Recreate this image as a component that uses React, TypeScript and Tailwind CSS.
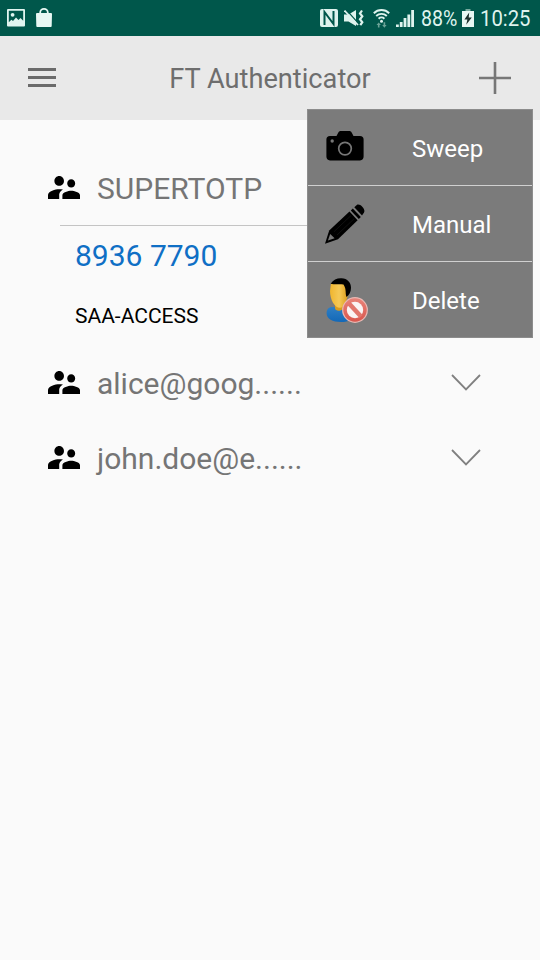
import type { ReactNode } from "react"

interface Account {
  name: string
  code?: string
  issuer?: string
}

interface MenuItem {
  label: string
  icon: ReactNode
}

const accounts: Account[] = [
  { name: "SUPERTOTP", code: "8936 7790", issuer: "SAA-ACCESS" },
  { name: "alice@goog......" },
  { name: "john.doe@e......" },
]

function PictureIcon() {
  return (
    <svg className="h-[18px] w-[18px]" viewBox="0 0 18 18">
      <path
        fill="#e0f5f0"
        fillRule="evenodd"
        d="M1 0h16a1 1 0 0 1 1 1v15.5a1 1 0 0 1-1 1H1a1 1 0 0 1-1-1V1a1 1 0 0 1 1-1zM1.800 1.800v11.500l2.600-2.500 1.600 1.200 3-3.500 2.500 2.500 2-2 2.700 2.700V1.800z"
      />
      <circle cx="5.6" cy="5.8" r="1.9" fill="#e0f5f0" />
    </svg>
  )
}

function BagIcon() {
  return (
    <svg className="h-[19px] w-4" viewBox="0 0 16 19">
      <path d="M4.2 6V4.6a3.8 3.7 0 0 1 7.6 0V6" fill="none" stroke="#e8f8f4" strokeWidth="1.8" />
      <path d="M1 5h14a1 1 0 0 1 1 1l-.3 12a1 1 0 0 1-1 1H1.3a1 1 0 0 1-1-1L0 6a1 1 0 0 1 1-1z" fill="#e8f8f4" />
    </svg>
  )
}

function NfcIcon() {
  return (
    <svg className="h-[18px] w-[18px]" viewBox="0 0 18 18">
      <rect width="18" height="18" rx="2" fill="#dff3ee" />
      <path d="M4.5 16V3l9 12V2" fill="none" stroke="#00574b" strokeWidth="2" />
    </svg>
  )
}

function MuteIcon() {
  return (
    <svg className="h-[18px] w-5" viewBox="0 0 20 18">
      <path d="M0 5.5h4.5L12 1v16l-7.5-4.5H0z" fill="#dff3ee" />
      <path d="M1.5 0 14.5 14.5" stroke="#00574b" strokeWidth="1.2" />
      <path d="M.5 1.5 14 16" stroke="#dff3ee" strokeWidth="1.8" />
      <path d="M18 1.5 16 4.5l2.3 2.8L16 10.3l2.3 2.9-2 3" fill="none" stroke="#dff3ee" strokeWidth="2.2" />
    </svg>
  )
}

function WifiIcon() {
  return (
    <svg className="h-[19px] w-[17px]" viewBox="0 0 17 19">
      <path
        d="M.8 4.2a11 11 0 0 1 15.4 0M3.2 7a7.7 7.7 0 0 1 10.6 0M5.6 9.7a4.2 4.2 0 0 1 5.8 0"
        fill="none"
        stroke="#dff3ee"
        strokeWidth="1.9"
      />
      <circle cx="8.5" cy="12.2" r="1.5" fill="#dff3ee" />
      <path d="M3.5 16 5.7 13.5l2.2 2.5H6.5v2.5H4.9V16zM9.2 16h1.4v-2.7h1.6V16h1.4l-2.2 2.8z" fill="#6ba397" />
    </svg>
  )
}

function SignalIcon() {
  return (
    <svg className="h-[17px] w-[18px]" viewBox="0 0 18 17" fill="#dff3ee">
      <path d="M0 14.5h2.8V17H0zM3.8 12h2.8v5H3.8zM7.6 8h2.8v9H7.6zM11.4 4.5h2.8V17h-2.8zM15.2 0H18v17h-2.8z" />
    </svg>
  )
}

function BatteryIcon() {
  return (
    <svg className="h-[18px] w-3" viewBox="0 0 12 18">
      <path d="M3.5 0h5v2h-5z" fill="#78aa9f" />
      <path d="M0 2h12v16H0z" fill="#e8f8f4" />
      <path d="M7.2 3.5 2.4 10.6h3L4.2 15.8l5.6-7.4H6.7z" fill="#1c302c" />
    </svg>
  )
}

function PeopleIcon() {
  return (
    <svg className="h-[23px] w-8" viewBox="2 5 20 14" preserveAspectRatio="none">
      <path d="M16.5 12c1.38 0 2.49-1.12 2.49-2.5S17.88 7 16.5 7C15.12 7 14 8.12 14 9.5s1.12 2.5 2.5 2.5zM9 11c1.66 0 2.99-1.34 2.99-3S10.66 5 9 5C7.34 5 6 6.34 6 8s1.34 3 3 3zm7.5 3c-1.83 0-5.5.92-5.5 2.75V19h11v-2.25c0-1.83-3.67-2.75-5.5-2.75zM9 13c-2.33 0-7 1.17-7 3.5V19h7v-2.25c0-.85.33-2.34 2.37-3.47C10.5 13.1 9.66 13 9 13z" />
    </svg>
  )
}

function CameraIcon() {
  return (
    <svg className="mr-[2px] mb-[3px] h-[30px] w-[38px]" viewBox="0 0 38 30">
      <path d="M4 5h6.5l1.7-3.2A2.6 2.6 0 0 1 14.8 0h8.4a2.6 2.6 0 0 1 2.6 1.8L27.5 5H34a3.6 3.6 0 0 1 3.6 3.6v17A3.8 3.8 0 0 1 34 29.4H4A3.8 3.8 0 0 1 .4 25.6v-17A3.6 3.6 0 0 1 4 5z" />
      <circle cx="19" cy="17.6" r="6.3" fill="none" stroke="#777" strokeWidth="1.7" />
      <circle cx="6.2" cy="10" r="1.7" fill="#777" />
    </svg>
  )
}

function PencilIcon() {
  return (
    <svg className="mr-[2px] h-10 w-10" viewBox="0 0 40 40">
      <path d="M0 39.8 4.2 26.5 24.5 7.6 32.6 16.2 13 35.3z" />
      <path d="M25.8 6.4 27.8 4.6 35.8 13 33.8 14.9z" />
      <path d="M29.3 3.3 31.8 1.1c2.8-2.3 9.2 4.2 7.2 7.4L37 11.500z" />
      <path d="M2.9 36.6 5.2 30 9.600 34.300z" fill="#777" />
      <path d="M9 27.700 26 11.500M12 31 29 14.800" stroke="#1c1c1c" strokeWidth=".6" />
    </svg>
  )
}

function RemoveUserIcon() {
  return (
    <svg className="mt-[2px] ml-[2px] h-[46px] w-[42px]" viewBox="0 0 42 46">
      <defs>
        <linearGradient id="face" x1="0" y1="0" x2="1" y2="0">
          <stop offset="0" stopColor="#f0b52e" />
          <stop offset=".5" stopColor="#f5c957" />
          <stop offset="1" stopColor="#d99a17" />
        </linearGradient>
        <linearGradient id="shirt" x1="0" y1="0" x2="0" y2="1">
          <stop offset="0" stopColor="#2f7fc4" />
          <stop offset="1" stopColor="#1268b8" />
        </linearGradient>
        <linearGradient id="ban" x1="0" y1="0" x2="0" y2="1">
          <stop offset="0" stopColor="#e88379" />
          <stop offset="1" stopColor="#d9564d" />
        </linearGradient>
      </defs>
      <path d="M8 29C2.5 28.5.6 31 .6 35.5c0 5 6 8.5 14.4 8.5 8 0 12-2 12-7 0-4-3-7-7-7.5z" fill="url(#shirt)" />
      <path d="M9 22v8c0 3 5 4 8 1l4-8z" fill="#d99c20" />
      <path d="M5 5h13c3 0 4.5 3 4.2 8-.4 8-3.4 16-7.7 16.8C9 30.4 4 22 4 13z" fill="url(#face)" />
      <path d="M4.6 5.8C7.5 1.5 11 0 15.5.2c6 .3 9.5 4.2 9.5 9.5 0 4.3-1.8 7.3-4.5 9.3-1-2.2-.6-4.5-1-7-.3-2.5-1-3.9-2-5.5C13 6 8.5 6.8 4.6 5.8z" />
      <circle cx="29" cy="32" r="12.9" fill="#e9b9b4" />
      <circle cx="29" cy="32" r="11.7" fill="url(#ban)" />
      <circle cx="29" cy="32" r="8.2" fill="#faf3f3" />
      <path d="m23 25.5 12 13" stroke="#e2766c" strokeWidth="4.5" />
    </svg>
  )
}

const menuItems: MenuItem[] = [
  { label: "Sweep", icon: <CameraIcon /> },
  { label: "Manual", icon: <PencilIcon /> },
  { label: "Delete", icon: <RemoveUserIcon /> },
]

function StatusBar() {
  return (
    <div className="flex h-9 items-center bg-[#00574b] pr-[9px] pl-[7px] text-[#dff3ee]">
      <div className="mb-px">
        <PictureIcon />
      </div>
      <div className="mb-px ml-[11px]">
        <BagIcon />
      </div>
      <div className="ml-auto flex items-center">
        <NfcIcon />
        <div className="ml-[6px]">
          <MuteIcon />
        </div>
        <div className="ml-[9px]">
          <WifiIcon />
        </div>
        <div className="ml-[6px]">
          <SignalIcon />
        </div>
        <span className="mt-px ml-[7px] w-[38px] origin-left scale-x-[0.87] text-[22.5px] whitespace-nowrap">88%</span>
        <div className="ml-[3px]">
          <BatteryIcon />
        </div>
        <span className="mt-px ml-[6px] w-[51px] origin-left scale-x-[0.9] text-[22.5px] whitespace-nowrap">10:25</span>
      </div>
    </div>
  )
}

function Header() {
  return (
    <header className="flex h-[84px] items-center justify-between bg-[#e9e9e9] pr-[29px] pl-7">
      <button aria-label="Menu" className="mb-px flex w-7 flex-col gap-[5px]">
        <span className="h-[3px] bg-[#6b6b6b]" />
        <span className="h-[3px] bg-[#6b6b6b]" />
        <span className="h-[3px] bg-[#6b6b6b]" />
      </button>
      <h1 className="mt-[3px] ml-[5px] text-[27.2px] text-[#6e6e6e]">FT Authenticator</h1>
      <button aria-label="Add">
        <svg className="h-8 w-8" viewBox="0 0 32 32">
          <path d="M16 0v32M0 16h32" stroke="#777" strokeWidth="2.6" />
        </svg>
      </button>
    </header>
  )
}

function AccountRow({ account }: { account: Account }) {
  return (
    <div>
      <div className="flex h-[75px] items-center pr-[59px] pl-12">
        <PeopleIcon />
        <span className="mt-[2px] ml-[17px] text-[30px] text-[#757575]">{account.name}</span>
        {!account.code && (
          <svg className="ml-auto h-[17px] w-[30px]" viewBox="0 0 30 17">
            <path d="m1 1 14 14.5L29 1" fill="none" stroke="#808080" strokeWidth="1.8" />
          </svg>
        )}
      </div>
      {account.code && (
        <div className="mr-[60px] ml-[60px] h-[120px] border-t border-[#c4c4c4] pl-[15px]">
          <p className="flex h-[59px] items-center text-[30px] text-[#0f6fc5]">{account.code}</p>
          <p className="mt-px flex h-[61px] items-center text-[21px] text-black">{account.issuer}</p>
        </div>
      )}
    </div>
  )
}

function ActionMenu() {
  return (
    <div className="absolute top-[109px] left-[307px] flex h-[229px] w-[226px] flex-col gap-px border border-[#8c8c8c] bg-[#d0d0d0]">
      {menuItems.map((item) => (
        <button key={item.label} className="flex flex-1 items-center bg-[#7b7b7b] text-left">
          <span className="flex w-[76px] justify-center">{item.icon}</span>
          <span className="mt-[2px] ml-7 text-2xl text-white">{item.label}</span>
        </button>
      ))}
    </div>
  )
}

export default function App() {
  return (
    <div className="relative min-h-[960px] w-[540px] overflow-hidden bg-[#fafafa] font-[Roboto,sans-serif]">
      <StatusBar />
      <Header />
      <main className="pt-[30px]">
        {accounts.map((account) => (
          <AccountRow key={account.name} account={account} />
        ))}
      </main>
      <ActionMenu />
    </div>
  )
}
